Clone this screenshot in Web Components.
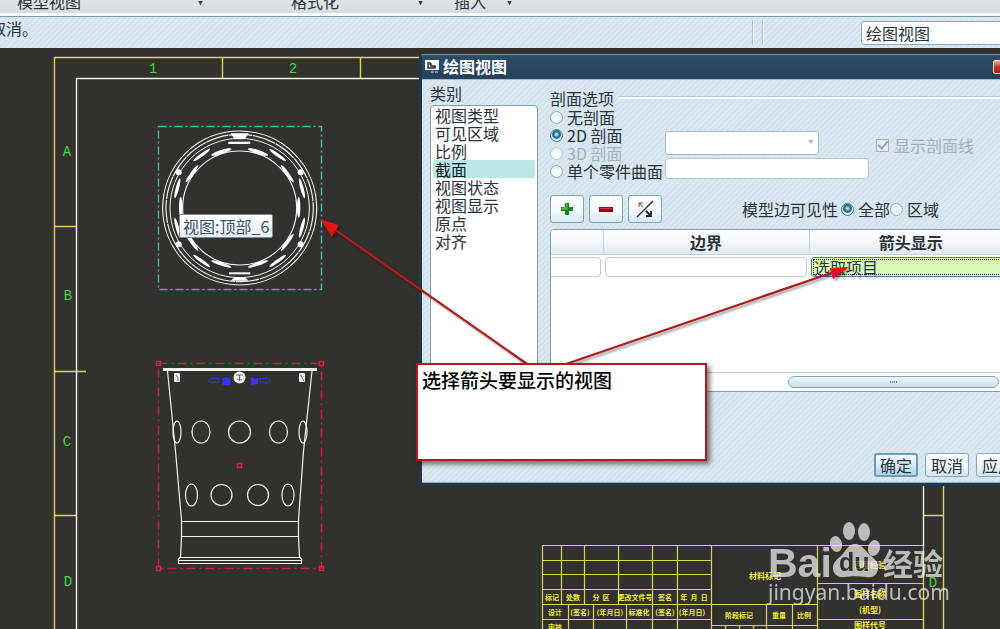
<!DOCTYPE html>
<html lang="zh-CN">
<head>
<meta charset="utf-8">
<title>绘图视图</title>
<style>
html, body { margin: 0; height: 100%; overflow: hidden; }
body { font: 16px/20px "Noto Sans CJK SC", sans-serif; color: #2b3238; background: #32312d; }
</style>
</head>
<body>
<drawing-app></drawing-app>

<script>
const stripes = 'repeating-linear-gradient(135deg, #d3e3ee 0 2px, #dce9f2 2px 4px)';
const define = (name, css, html) => {
  const template = document.createElement('template');
  template.innerHTML = `<style>*{box-sizing:border-box}${css}</style>${html}`;
  customElements.define(name, class extends HTMLElement {
    constructor() {
      super();
      this.attachShadow({ mode: 'open' }).append(template.content.cloneNode(true));
    }
  });
};

define('ribbon-group', `
  :host { display: flex; align-items: center; height: 20px; white-space: nowrap; }
  span { flex: 1; }
  i { width: 5px; height: 5px; margin-top: 4px; background: #3a4248; clip-path: polygon(0 0, 100% 0, 50% 100%); }
`, `<span><slot></slot></span><i></i>`);

define('ribbon-bar', `
  :host { display: block; height: 17px; overflow: hidden; background: linear-gradient(#dfe4e6, #d6dde0 13px, #fff 13px 16px, #7b9aa8 16px); }
  div { display: flex; margin-top: -9px; padding-left: 17px; }
  ribbon-group:nth-child(1) { width: 186px; margin-right: 88px; }
  ribbon-group:nth-child(2) { width: 132px; margin-right: 31px; }
  ribbon-group:nth-child(3) { width: 58px; }
`, `<div><ribbon-group>模型视图</ribbon-group><ribbon-group>格式化</ribbon-group><ribbon-group>插入</ribbon-group></div>`);

define('message-bar', `
  :host { display: flex; align-items: center; height: 31px; overflow: hidden; background: ${stripes}; }
  p { flex: 1; margin: 0 0 10px -10px; }
  .bars { width: 11px; height: 25px; border: solid #f4f9fc; border-width: 0 1px; box-shadow: -1px 0 #afc6d4, inset -1px 0 #afc6d4; margin-right: 97px; }
  input { width: 160px; height: 24px; margin-right: -21px; padding: 0 4px; border: 1px solid #8fabbb; border-radius: 3px; background: #fff; font: inherit; color: inherit; }
`, `<p>取消。</p><div class="bars"></div><input aria-label="过滤器" value="绘图视图">`);

define('icon-button', `
  :host { display: block; }
  button { display: grid; place-items: center; width: 34px; height: 28px; padding: 0; border: 1px solid #7fa5b9; border-radius: 3px; background: linear-gradient(#fff, #f3f8fb 60%, #d9e9f3); }
`, `<button><slot></slot></button>`);

define('push-button', `
  :host { display: block; }
  button { width: 44px; height: 24px; padding: 0; border: 1px solid #86a9bb; border-radius: 3px; background: linear-gradient(#fff, #f1f7fa 50%, #cfe4f0); font: inherit; color: inherit; white-space: nowrap; }
  :host([primary]) button { border: 2px solid #6c9cb8; background: linear-gradient(#f2f9fd, #d5ebf7 50%, #a9d5ef); }
`, `<button><slot></slot></button>`);

const controls = `
  label { display: flex; align-items: center; gap: 4px; height: 18px; line-height: 18px; white-space: nowrap; }
  input[type=radio] { appearance: none; width: 13px; height: 13px; margin: 0; border: 1px solid #8faebd; border-radius: 50%; background: radial-gradient(circle at 50% 65%, #fff, #dceaf2); }
  input[type=radio]:checked { border-color: #3e7896; background: radial-gradient(circle at 50% 40%, #a9d6e6 0 1px, #236a8b 3px, #2c7494 4px, #e9f5fa 5px); }
  input[type=radio]:disabled { border-color: #bccbd4; }
  .off { color: #a6afb5; }
`;

define('category-list', `
  :host { display: flex; flex-direction: column; gap: 2px; }
  select { flex: 1; appearance: none; width: 100%; padding: 0 2px; overflow: hidden; border: 1px solid #7ba0b3; border-radius: 4px; background: #fff; font: inherit; color: inherit; outline: 0; }
  option { display: flex; align-items: center; height: 18px; min-height: 18px; padding: 0 2px; line-height: 18px; color: #2b3238; border-radius: 2px; }
  option:checked { background: #b9e8e6 linear-gradient(#b9e8e6, #b9e8e6); color: #10181c; }
`, `<label for="list">类别</label>
<select id="list" size="8"><option>视图类型</option><option>可见区域</option><option>比例</option><option selected>截面</option><option>视图状态</option><option>视图显示</option><option>原点</option><option>对齐</option></select>`);

define('section-options', `
  :host { display: block; }
  ${controls}
  fieldset { margin: 0; padding: 0; border: 0; min-width: 0; }
  legend { display: flex; align-items: center; gap: 4px; width: 100%; padding: 0; height: 21px; }
  legend::after { content: ""; flex: 1; height: 2px; border-top: 1px solid #b3c7d3; background: #fff; }
  .row { display: flex; }
  .kinds { width: 115px; }
  .fields { display: grid; gap: 4px; align-content: start; padding-top: 22px; width: 204px; }
  select { appearance: none; width: 154px; height: 24px; border: 1px solid #a9bac4; border-radius: 3px; background: #fff; opacity: 1; }
  .drop { position: relative; width: 154px; height: 24px; }
  .drop::after { content: ""; position: absolute; right: 5px; top: 10px; border: 4px solid transparent; border-top-color: #b0b8bc; border-bottom: 0; border-left-width: 3px; border-right-width: 3px; }
  input[type=text] { width: 100%; height: 21px; border: 1px solid #b4c3cc; border-radius: 4px; background: #fff; }
  .hatch { margin: 28px 0 0 7px; gap: 5px; }
  input[type=checkbox] { appearance: none; width: 13px; height: 13px; margin: 0; border: 1px solid #a3b0b8; background: #e5edf2; display: grid; place-items: center; }
  input[type=checkbox]::after { content: ""; width: 4px; height: 8px; margin-top: -2px; border: solid #9aa5ab; border-width: 0 2px 2px 0; transform: rotate(40deg); }
`, `<fieldset><legend>剖面选项</legend>
<div class="row">
  <div class="kinds">
    <label><input type="radio" name="kind">无剖面</label>
    <label><input type="radio" name="kind" checked>2D 剖面</label>
    <label class="off"><input type="radio" name="kind" disabled>3D 剖面</label>
    <label><input type="radio" name="kind">单个零件曲面</label>
  </div>
  <div class="fields"><div class="drop"><select aria-label="剖面" disabled></select></div><input type="text" aria-label="曲面"></div>
  <label class="hatch off"><input type="checkbox" checked disabled>显示剖面线</label>
</div></fieldset>`);

define('section-toolbar', `
  :host { display: flex; align-items: center; gap: 5px; }
  ${controls}
  .edges { display: flex; align-items: center; margin-left: 75px; }
  .edges span { margin-right: 3px; white-space: nowrap; }
`, `
<icon-button aria-label="添加"><svg width="14" height="14" viewBox="0 0 14 14"><path d="M5 1h4v4h4v4H9v4H5V9H1V5h4z" fill="#15801c"/><path d="M6 2h1v4H2v1h5v1" fill="none" stroke="#5ed04e"/></svg></icon-button>
<icon-button aria-label="移除"><svg width="14" height="14" viewBox="0 0 14 14"><path d="M0 5h14v5H0z" fill="#8c0f18"/><path d="M1 6h12v1H1z" fill="#d8323b"/></svg></icon-button>
<icon-button aria-label="反向"><svg width="18" height="18" viewBox="0 0 18 18"><path d="M1 17L17 1" stroke="#1f3350" stroke-width="1.4"/><path d="M3 7V3h4M3 3l4 4" fill="none" stroke="#8d8675" stroke-width="1.4"/><path d="M15 11v5h-5M14 15l-4-4" fill="none" stroke="#1f2630" stroke-width="1.8"/></svg></icon-button>
<div class="edges" role="radiogroup"><span>模型边可见性</span>
<label><input type="radio" name="edge" checked>全部</label><label><input type="radio" name="edge">区域</label></div>`);

define('section-table', `
  :host { display: flex; flex-direction: column; border: 1px solid #7ba0b3; border-radius: 4px; background: #fff; overflow: hidden; }
  table { width: 100%; table-layout: fixed; border-collapse: collapse; }
  .a { width: 52px; } .b { width: 206px; }
  th { height: 24px; padding: 0; background: linear-gradient(#fff, #f4f8fb 50%, #dfeaf1); border-bottom: 1px solid #c2d3dd; border-right: 1px solid #c2d3dd; font-weight: 700; line-height: 20px; }
  td { padding: 2px 2px 0; }
  td:first-child { padding-left: 0; }
  input { display: block; width: 100%; height: 20px; padding: 0 2px; border: 1px solid #c6ccd0; border-radius: 4px; background: #fff; font: inherit; color: inherit; }
  td:first-child input { border-left: 0; border-radius: 0 4px 4px 0; }
  .pick { border: 1px solid #4c7a93; border-radius: 3px; background: #d9fbb8; outline: 1px dotted #222; outline-offset: -3px; }
  .track { margin-top: auto; height: 19px; padding: 3px 14px 0 237px; border-top: 1px solid #c2d3dd; }
  .thumb { display: grid; place-items: center; height: 12px; border: 1px solid #86a6b8; border-radius: 6px; background: linear-gradient(#f0f7fb, #c9deea); }
  .thumb::after { content: ""; width: 8px; height: 2px; background: repeating-linear-gradient(90deg, #6d8796 0 1px, transparent 1px 2px); }
`, `<table><colgroup><col class="a"><col class="b"><col></colgroup>
<thead><tr><th></th><th>边界</th><th>箭头显示</th></tr></thead>
<tbody><tr><td><input aria-label="序号"></td><td><input aria-label="边界"></td><td><input class="pick" aria-label="箭头显示" value="选取项目"></td></tr></tbody></table>
<div class="track"><div class="thumb"></div></div>`);

define('view-dialog', `
  :host { display: block; border: 1px solid #1d3850; border-top-color: #6f97ae; border-width: 1px 3px 3px; border-radius: 4px 4px 0 0; background: ${stripes}; overflow: hidden; box-shadow: inset 0 -1px #8fb0c2; }
  header { display: flex; align-items: center; gap: 3px; height: 25px; padding: 0 4px 0 3px; background: linear-gradient(#2c4d69, #28405a); border-bottom: 1px solid #9fc0d0; color: #fff; font-weight: 700; }
  h1 { flex: 1; margin: 0; padding-bottom: 2px; font-size: 16px; line-height: 20px; }
  .close { width: 24px; height: 14px; padding: 0; border: 1px solid #f2d0cc; border-radius: 2px; background: linear-gradient(#e9a79c, #c23a2c 50%, #a12318); }
  .body { display: grid; grid-template-columns: 108px 1fr; gap: 12px; padding: 3px 7px 0 8px; }
  .main { display: grid; align-content: start; padding-top: 4px; }
  section-toolbar { margin: 15px 0 6px; }
  section-table { height: 163px; }
  footer { display: flex; justify-content: flex-end; gap: 7px; padding: 61px 1px 6px 0; }
`, `<header>
<svg width="15" height="14" viewBox="0 0 15 14"><path d="M0 0h14v10H0z" fill="#fff"/><path d="M3 2v6h7V6H6V4H5V2" fill="none" stroke="#222" stroke-width="1.4"/><path d="M6 12h3M10 12h3" stroke="#dde" fill="none"/></svg>
<h1>绘图视图</h1><button class="close" aria-label="关闭"></button></header>
<div class="body"><category-list></category-list>
<div class="main"><section-options></section-options><section-toolbar></section-toolbar><section-table></section-table></div></div>
<footer><push-button primary>确定</push-button><push-button>取消</push-button><push-button>应用</push-button></footer>`);

define('view-tooltip', `
  :host { display: block; padding: 1px 3px; border: 1px solid #7b8b98; border-radius: 2px; background: linear-gradient(#fff, #e6eef4); color: #37536b; white-space: nowrap; }
`, `<slot></slot>`);

define('callout-note', `
  :host { display: block; padding: 5px 4px; border: 2px solid #b01c1c; background: #fff; color: #000; font-size: 19px; line-height: 20px; font-weight: 500; box-shadow: 3px 3px 5px rgba(40,20,20,.6); }
`, `<slot></slot>`);

define('site-watermark', `
  :host { display: block; opacity: .72; color: #f1f1f1; }
  svg { display: block; overflow: visible; }
  text { fill: currentColor; }
  .bai { font: 700 41px "Liberation Sans", sans-serif; }
  .du { font: 700 25px "Liberation Sans", sans-serif; fill: #32312d; }
  .cn { font: 700 30px "Noto Sans CJK SC", sans-serif; }
  .url { font: 21px "Noto Sans", sans-serif; }
`, `<svg width="180" height="90" fill="#f1f1f1">
<text class="bai" x="0" y="57">Bai</text>
<ellipse cx="81" cy="11" rx="6" ry="9"/><ellipse cx="96" cy="12" rx="6" ry="9"/>
<ellipse cx="68" cy="24" rx="6" ry="8" transform="rotate(-14 68 24)"/><ellipse cx="106" cy="28" rx="6" ry="8" transform="rotate(14 106 28)"/>
<path d="M87 24c7 0 10 7 15 11 6 5 9 8 8 14-1 7-6 9-12 8-7-1-15-1-21 0-7 1-12-3-12-9 0-5 3-8 8-12 5-5 7-12 14-12z"/>
<text class="du" x="71" y="51">du</text>
<text class="cn" x="115" y="55">经验</text>
<text class="url" x="0" y="80">jingyan.baidu.com</text>
</svg>`);

define('sheet-drawing', `
  :host { display: block; }
  svg { display: block; width: 100%; height: 100%; overflow: hidden; }
  .y { stroke: #d9d45a; fill: none; } .w { stroke: #f4f4ee; fill: none; }
  .zone text { font: 14px "Liberation Mono", monospace; fill: #45d245; text-anchor: middle; }
  .block text { font: 700 8px "Noto Sans CJK SC", sans-serif; fill: #f4ef3a; text-anchor: middle; }
  .block .s { font-size: 7px; }
`, `<svg aria-label="图纸"><g transform="translate(0 -48)">
<g class="y" stroke-width="1.4">
<path d="M54.5 640V57.5H430M222.5 57v21M360.5 57v21M54 226.5h22M54 371.5h32M54 515.5h22M923 515.5h20M943.5 480v160"/>
<path d="M923.5 545v90"/>
</g>
<path class="w" stroke-width="1.4" d="M76.5 640V78.5H430M923.5 480v66"/>
<g class="zone"><text x="153" y="73">1</text><text x="293" y="73">2</text><text x="67" y="156">A</text><text x="68" y="300">B</text><text x="67" y="446">C</text><text x="68" y="586">D</text><text x="933" y="587">D</text></g>

<rect x="158.500" y="126.500" width="163" height="163" fill="none" stroke="#45b5b5" stroke-width="1.4" stroke-dasharray="8 3 2 3"/>
<g transform="translate(150 115) scale(.3333)" fill="none" stroke="#f4f4ee" stroke-width="3.500">
<circle cx="269" cy="279" r="231"/><circle cx="269" cy="279" r="221" stroke-dasharray="70 2"/><circle cx="269" cy="279" r="209" stroke-width="3"/><circle cx="269" cy="279" r="171"/>
<g fill="#fff" stroke="none">
<path d="M242 55h54l-12 18h-30zM242 497h54l-12-10h-30z"/><rect x="235" y="80" width="66" height="7"/><rect x="237" y="472" width="64" height="6"/>
<ellipse cx="155" cy="120" rx="31" ry="5" transform="rotate(-36 155 120)"/><ellipse cx="383" cy="120" rx="31" ry="5" transform="rotate(36 383 120)"/>
<ellipse cx="214" cy="111" rx="32" ry="6" transform="rotate(-18 214 111)"/><ellipse cx="324" cy="111" rx="32" ry="6" transform="rotate(18 324 111)"/>
<ellipse cx="126" cy="176" rx="32" ry="5" transform="rotate(-54 126 176)"/><ellipse cx="412" cy="176" rx="32" ry="5" transform="rotate(54 412 176)"/>
<ellipse cx="82" cy="220" rx="31" ry="5" transform="rotate(-75 82 220)"/><ellipse cx="456" cy="220" rx="31" ry="5" transform="rotate(75 456 220)"/>
<ellipse cx="92" cy="277" rx="5" ry="32"/><ellipse cx="446" cy="277" rx="5" ry="32"/>
<ellipse cx="82" cy="338" rx="31" ry="5" transform="rotate(75 82 338)"/><ellipse cx="456" cy="338" rx="31" ry="5" transform="rotate(-75 456 338)"/>
<ellipse cx="126" cy="382" rx="32" ry="5" transform="rotate(54 126 382)"/><ellipse cx="412" cy="382" rx="32" ry="5" transform="rotate(-54 412 382)"/>
<ellipse cx="155" cy="438" rx="31" ry="5" transform="rotate(36 155 438)"/><ellipse cx="383" cy="438" rx="31" ry="5" transform="rotate(-36 383 438)"/>
<ellipse cx="214" cy="447" rx="32" ry="5" transform="rotate(18 214 447)"/><ellipse cx="324" cy="447" rx="32" ry="5" transform="rotate(-18 324 447)"/>
<circle cx="86" cy="172" r="9"/><circle cx="452" cy="172" r="9"/><circle cx="86" cy="388" r="9"/><circle cx="452" cy="388" r="9"/>
</g></g>

<g fill="none" stroke="#d01c3c"><rect x="158.500" y="363.500" width="163" height="205" stroke-dasharray="9 4 2 4" stroke-width="1.4"/>
</g>
<g class="w" stroke-width="1.2">
<path d="M163 369.500h154" stroke-width="3"/>
<path d="M167.500 371l8 80 6 69v18l-1 19-2 2v4.500h123v-4.500l-2-2-1-19v-18l5-69 8.500-80M182 521.500h116M182 536.500h116M179 557.500h122M179 560.500h122" />
<ellipse cx="177" cy="432" rx="4" ry="11"/><ellipse cx="201" cy="432" rx="9" ry="11"/><circle cx="239.500" cy="432" r="11"/><ellipse cx="278.500" cy="432" rx="9" ry="11"/><ellipse cx="303" cy="432" rx="4" ry="11"/>
<ellipse cx="191.500" cy="495" rx="6" ry="11"/><circle cx="221.500" cy="495" r="10.500"/><circle cx="258" cy="495" r="10.500"/><ellipse cx="288" cy="495" rx="6" ry="11"/>
</g>
<g fill="none" stroke="#e01c3c" stroke-width="1.4"><rect x="156.500" y="361.500" width="4" height="4"/><rect x="319.500" y="361.500" width="4" height="4"/><rect x="156.500" y="566.500" width="4" height="4"/><rect x="319.500" y="566.500" width="4" height="4"/><rect x="237.500" y="463.500" width="4" height="4"/></g>
<g fill="#eee"><rect x="174" y="373" width="6" height="9" rx="1"/><rect x="299" y="373" width="6" height="9" rx="1"/><circle cx="239.500" cy="377.500" r="6"/></g>
<path d="M176 375l2 3v3M301 375l1 3 2 3M236 375h7M239.500 375v6M237 379l5 1" stroke="#555" stroke-width=".8" fill="none"/>
<g fill="none" stroke="#3434e8"><path d="M219 378.500h-6v-1.500l-5 3.500 5 3v-1.500h6zM260 378.500h6v-1.500l5 3.500-5 3v-1.500h-6z"/></g>
<path d="M223 378l3-1 4 1 1 7h-8l-1-2zM251 377l4 2 3-1v6l-7 1z" fill="#3434e8"/>

<g class="block">
<path class="y" stroke-width="1.2" d="M542.500 640V545.500H923M542 560.500h169M542 574.500h169M542 589.500h169M542 604.500h276M542 619.500h169M561.500 545v59M584.500 545v59M618.500 545v59M652.500 545v95M677.500 545v95M711.500 545v95M568.500 604v36M593.500 604v36M626.500 604v36M817.500 545v95M766.500 604v36M792.500 604v36M711 625.500h106M725.500 625v9M739.500 625v9M753.500 625v9M817 583.500h106M817 619.500h106"/>
<g><text class="s" x="552" y="600">标记</text><text class="s" x="573" y="600">处数</text><text class="s" x="601" y="600">分&#160;&#160;区</text><text class="s" x="635" y="600">更改文件号</text><text class="s" x="665" y="600">签名</text><text class="s" x="694" y="600">年&#160;&#160;月&#160;&#160;日</text>
<text class="s" x="555" y="615">设计</text><text class="s" x="580" y="615">(签名)</text><text class="s" x="610" y="615">(年月日)</text><text class="s" x="639" y="615">标准化</text><text class="s" x="665" y="615">(签名)</text><text class="s" x="692" y="615">(年月日)</text><text class="s" x="555" y="630">审核</text>
<text class="s" x="739" y="618">阶段标记</text><text class="s" x="779" y="618">重量</text><text class="s" x="804" y="618">比例</text></g>
<text x="765" y="579">材料标记</text><text x="870" y="568">百度经验</text><text x="870" y="597">图样名称</text><text x="870" y="613">(机型)</text><text x="870" y="628">图样代号</text>
</g></g></svg>`);

define('pointer-arrows', `
  :host { display: block; pointer-events: none; }
  svg { display: block; width: 100%; height: 100%; filter: drop-shadow(2px 2px 1px rgba(0,0,0,.4)); }
`, `<svg><g transform="translate(0 -48)"><path d="M527 364L334 229M566 364L834 272" stroke="#b01c1c" stroke-width="2.200"/>
<path d="M320 219l19 6-3 5-4 7zM849 267l-19 1 1 5 2 6z" fill="#e01414"/></g></svg>`);

define('drawing-app', `
  :host { display: flex; flex-direction: column; height: 100vh; }
  main { position: relative; flex: 1; overflow: hidden; background: #32312d; }
  sheet-drawing, pointer-arrows { position: absolute; inset: 0; }
  view-tooltip { position: absolute; left: 179px; top: 166px; }
  view-dialog { position: absolute; left: 419px; right: -24px; top: 6px; }
  callout-note { position: absolute; left: 416px; top: 315px; width: 291px; height: 98px; }
  site-watermark { position: absolute; right: 52px; bottom: 19px; }
`, `<ribbon-bar></ribbon-bar><message-bar></message-bar>
<main><sheet-drawing></sheet-drawing><view-tooltip>视图:顶部_6</view-tooltip><view-dialog></view-dialog>
<pointer-arrows></pointer-arrows><callout-note>选择箭头要显示的视图</callout-note><site-watermark></site-watermark></main>`);
</script>
</body>
</html>
